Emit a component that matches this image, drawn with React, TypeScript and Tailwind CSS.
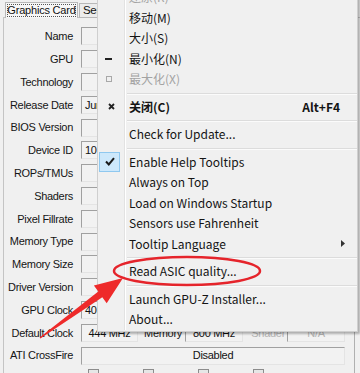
import React from "react";

const labels: { label: string; value?: string }[] = [
  { label: "Name" },
  { label: "GPU" },
  { label: "Technology" },
  { label: "Release Date", value: "Jun 2010" },
  { label: "BIOS Version" },
  { label: "Device ID", value: "10DE - 0DE1" },
  { label: "ROPs/TMUs" },
  { label: "Shaders" },
  { label: "Pixel Fillrate" },
  { label: "Memory Type" },
  { label: "Memory Size" },
  { label: "Driver Version" },
  { label: "GPU Clock", value: "405 MHz" },
];

type Item =
  | { sep: true }
  | {
      sep?: false;
      text: string;
      disabled?: boolean;
      bold?: boolean;
      shortcut?: string;
      icon?: "restore" | "min" | "max" | "close" | "check";
      sub?: boolean;
    };

const items: Item[] = [
  { text: "还原(R)", disabled: true, icon: "restore" },
  { text: "移动(M)" },
  { text: "大小(S)" },
  { text: "最小化(N)", icon: "min" },
  { text: "最大化(X)", disabled: true, icon: "max" },
  { sep: true },
  { text: "关闭(C)", bold: true, shortcut: "Alt+F4", icon: "close" },
  { sep: true },
  { text: "Check for Update..." },
  { sep: true },
  { text: "Enable Help Tooltips", icon: "check" },
  { text: "Always on Top" },
  { text: "Load on Windows Startup" },
  { text: "Sensors use Fahrenheit" },
  { text: "Tooltip Language", sub: true },
  { sep: true },
  { text: "Read ASIC quality..." },
  { sep: true },
  { text: "Launch GPU-Z Installer..." },
  { text: "About..." },
];

const MenuIcon = ({ icon }: { icon?: string }) => {
  if (icon === "check")
    return (
      <div className="w-[21px] h-[20px] ml-px bg-[#cde8fb] border border-[#8fc8ef] flex items-center justify-center">
        <svg width="10" height="9" viewBox="0 0 10 9">
          <path d="M1 4.5 L3.8 7.5 L9 1.2" stroke="#1b1b1b" strokeWidth="2" fill="none" />
        </svg>
      </div>
    );
  if (icon === "min") return <div className="ml-[7px] w-[7px] h-[2px] bg-[#222]" />;
  if (icon === "max") return <div className="ml-[8px] w-[6px] h-[6px] border border-[#a8a8a8]" />;
  if (icon === "restore") return <div className="ml-[9px] w-[5px] h-[4px] border border-[#a8a8a8]" />;
  if (icon === "close")
    return (
      <svg className="ml-[10px]" width="7" height="7" viewBox="0 0 7 7">
        <path d="M1 1 L6 6 M6 1 L1 6" stroke="#222" strokeWidth="1.8" />
      </svg>
    );
  return null;
};

const Field = ({ w, children, center, gray }: { w: string; children?: React.ReactNode; center?: boolean; gray?: boolean }) => (
  <div
    className={`${w} h-[18px] border border-t-[#a0a0a0] border-l-[#a0a0a0] border-b-[#e4e4e4] border-r-[#e4e4e4] bg-[#f2f2f2] flex items-center overflow-hidden whitespace-nowrap ${
      center ? "justify-center" : "pl-[3px]"
    } ${gray ? "text-[#b4b4b4]" : "text-[#111]"}`}
  >
    {children}
  </div>
);

export default function App() {
  return (
    <div
      className="relative w-[360px] h-[373px] overflow-hidden bg-[#f0f0f0] text-[11px] tracking-[-0.3px]"
      style={{ fontFamily: '"Liberation Sans", Arial, sans-serif' }}
    >
      {/* tabs */}
      <div className="flex items-start h-[18px] pl-[5px] pt-[2px]">
        <div className="w-[73px] h-[16px] border border-b-0 border-[#b8b8b8] bg-[#f7f7f7] p-[1px]">
          <div className="h-full border border-dotted border-[#555] flex items-center justify-center whitespace-nowrap text-[11px] tracking-[-0.2px] text-[#111]">
            Graphics Card
          </div>
        </div>
        <div className="mt-[1px] ml-px w-[22px] h-[15px] overflow-hidden whitespace-nowrap border border-[#b8b8b8] bg-[#ececec] pl-[3px] text-[11.5px] leading-[13px] text-[#111]">
          Sensors
        </div>
      </div>

      {/* panel */}
      <div className="ml-[3px] -mt-px border-l border-t border-[#c4c4c4] pt-[7px] h-[400px]">
        {labels.map((r) => (
          <div key={r.label} className="h-[22.8px] flex items-center">
            <div className="w-[69px] text-right text-[#151515] whitespace-nowrap">{r.label}</div>
            <div className="ml-[8px]">
              <Field w="w-[180px]">{r.value}</Field>
            </div>
          </div>
        ))}
        <div className="h-[22.8px] flex items-center">
          <div className="w-[69px] text-right text-[#151515] whitespace-nowrap">Default Clock</div>
          <div className="ml-[8px] flex items-center">
            <Field w="w-[57px]" center>
              444 MHz
            </Field>
            <div className="w-[47px] text-right pr-[3px] text-[#151515]">Memory</div>
            <Field w="w-[58px]" center>
              800 MHz
            </Field>
            <div className="w-[44px] text-right pr-[2px] text-[#b4b4b4]">Shader</div>
            <Field w="w-[58px]" center gray>
              N/A
            </Field>
          </div>
        </div>
        <div className="h-[22.8px] flex items-center">
          <div className="w-[69px] text-right text-[#151515] whitespace-nowrap">ATI CrossFire</div>
          <div className="ml-[8px]">
            <Field w="w-[264px]" center>
              Disabled
            </Field>
          </div>
        </div>
        <div className="flex pt-[2px] pl-[84px] gap-[44px]">
          {["OpenCL", "CUDA", "PhysX", "DirectCompute"].map((c) => (
            <div key={c} className="flex items-start gap-[4px] text-[#b4b4b4]">
              <div className="w-[11px] h-[11px] border border-[#8c8c8c] bg-[#e6e6e6]" />
            </div>
          ))}
        </div>
      </div>

      {/* right window edge */}
      <div className="absolute left-[354px] top-[300px] w-px h-[80px] bg-[#b0b0b0]" />

      {/* context menu */}
      <div
        className="absolute left-[97px] top-[-15px] w-[261px] bg-[#f0f0f0] border border-[#cfcfcf] py-[1px] shadow-[2px_2px_2px_rgba(0,0,0,0.28)]"
        style={{ fontFamily: '"Noto Sans CJK SC", "Noto Sans", sans-serif' }}
      >
        {items.map((it, i) =>
          it.sep ? (
            <div key={i} className="h-[7px] flex">
              <div className="w-[27px] border-r border-r-[#e2e2e2] shadow-[1px_0_0_#fff]" />
              <div className="flex-1 ml-[2px] mt-[3px] h-[2px] border-t border-t-[#dcdcdc] border-b border-b-[#fbfbfb]" />
            </div>
          ) : (
            <div key={i} className="h-[20.5px] flex items-center">
              <div className="w-[27px] h-full flex items-center border-r border-r-[#e2e2e2] shadow-[1px_0_0_#fff]">
                <MenuIcon icon={it.icon} />
              </div>
              <div
                className={`flex-1 pl-[4px] pr-[16px] flex items-center text-[12px] tracking-[0px] ${
                  it.disabled ? "text-[#a3a3a3]" : "text-[#141414]"
                } ${it.bold ? "font-bold" : ""}`}
              >
                <span className="flex-1 whitespace-nowrap">{it.text}</span>
                {it.shortcut && <span className="font-bold mr-[1px]">{it.shortcut}</span>}
                {it.sub && (
                  <svg width="4" height="7" viewBox="0 0 4 7" className="mr-[-4px]">
                    <path d="M0 0 L4 3.5 L0 7 Z" fill="#333" />
                  </svg>
                )}
              </div>
            </div>
          )
        )}
      </div>

      {/* annotation */}
      <svg className="absolute left-0 top-0 pointer-events-none" width="360" height="373" viewBox="0 0 360 373">
        <ellipse cx="187" cy="271" rx="73" ry="14" fill="none" stroke="#e5242b" strokeWidth="2.5" />
        <polygon points="39.6,337.5 40.4,338.5 102.3,297.2 106.7,303.3 123,278 93.9,285.5 98.3,291.6" fill="#ee2a2a" />
      </svg>
    </div>
  );
}
